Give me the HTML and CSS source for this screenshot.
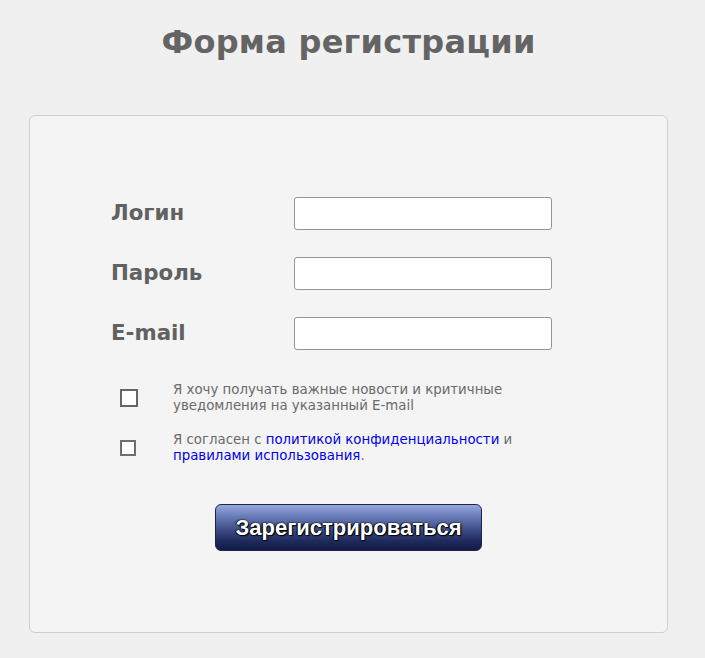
FILE: index.html
```html
<!DOCTYPE html>
<html lang="ru">
<head>
<meta charset="utf-8">
<title>Форма регистрации</title>
<link rel="stylesheet" href="styles.css">
</head>
<body>
<div class="page">
  <h1 class="title">Форма регистрации</h1>
  <form class="card">
    <div class="fields">
      <label class="label" for="login">Логин</label>
      <input class="input" id="login" type="text">
      <label class="label" for="pass">Пароль</label>
      <input class="input" id="pass" type="password">
      <label class="label" for="email">E-mail</label>
      <input class="input" id="email" type="email">
    </div>
    <div class="checks">
      <div class="check-row">
        <span class="box-cell"><input class="box box-big" type="checkbox"></span>
        <span class="check-text">Я хочу получать важные новости и критичные уведомления на указанный E-mail</span>
      </div>
      <div class="check-row">
        <span class="box-cell"><input class="box" type="checkbox"></span>
        <span class="check-text">Я согласен с <a class="link" href="#">политикой конфиденциальности</a> и <a class="link" href="#">правилами использования</a>.</span>
      </div>
    </div>
    <div class="actions">
      <button class="submit" type="button">Зарегистрироваться</button>
    </div>
  </form>
</div>
</body>
</html>
```
FILE: styles.css
```css
html, body {
  margin: 0;
  padding: 0;
  background: #f0f0f0;
}
body {
  font-family: "DejaVu Sans", Verdana, sans-serif;
  color: #666;
}
.page {
  width: 639px;
  margin-left: 29px;
}
.title {
  margin: 23px 0 0;
  font-size: 32px;
  line-height: 38px;
  font-weight: bold;
  letter-spacing: 0.25px;
  text-align: center;
  color: #646464;
}
.card {
  box-sizing: border-box;
  margin-top: 54px;
  height: 518px;
  background: #f4f4f4;
  border: 1px solid #cfcfcf;
  border-radius: 6px;
  padding: 81px 0 0 81px;
}
.fields {
  display: grid;
  grid-template-columns: 183px 258px;
  row-gap: 27px;
  align-items: center;
}
.label {
  font-size: 21.33px;
  font-weight: bold;
  color: #616161;
  line-height: 24px;
  padding-bottom: 2px;
}
.input {
  box-sizing: border-box;
  width: 258px;
  height: 33px;
  margin: 0;
  border: 1px solid #959595;
  border-radius: 3px;
  background: #fff;
}
.checks {
  margin-top: 32px;
  margin-left: 9px;
  display: flex;
  flex-direction: column;
  gap: 18px;
}
.check-row {
  display: flex;
  align-items: center;
}
.box-cell {
  width: 53px;
  flex: none;
  display: flex;
  align-items: center;
}
.box {
  appearance: none;
  -webkit-appearance: none;
  box-sizing: border-box;
  margin: 0;
  width: 16px;
  height: 16px;
  border: 2px solid #6e6e6e;
  background: #fff;
}
.box-big {
  width: 18px;
  height: 18px;
  border-color: #666;
}
.check-text {
  width: 350px;
  font-size: 13.33px;
  line-height: 16px;
  color: #6a6a6a;
}
.link {
  color: #0000ee;
  text-decoration: none;
}
.actions {
  margin-top: 40px;
  margin-left: -81px;
  display: flex;
  justify-content: center;
}
.submit {
  box-sizing: border-box;
  width: 267px;
  height: 47px;
  border: 1px solid #1c2642;
  border-radius: 6px;
  background: linear-gradient(to bottom, #95a9df 0%, #6a7cb8 25%, #3d4c86 55%, #1e2a5c 80%, #121b49 100%);
  color: #fff;
  font-family: "Liberation Sans", Arial, sans-serif;
  font-weight: bold;
  font-size: 22px;
  text-shadow: 1px 1px 1px #000, -1px 0 1px #000, 0 0 2px #000;
  padding: 0;
}
```
